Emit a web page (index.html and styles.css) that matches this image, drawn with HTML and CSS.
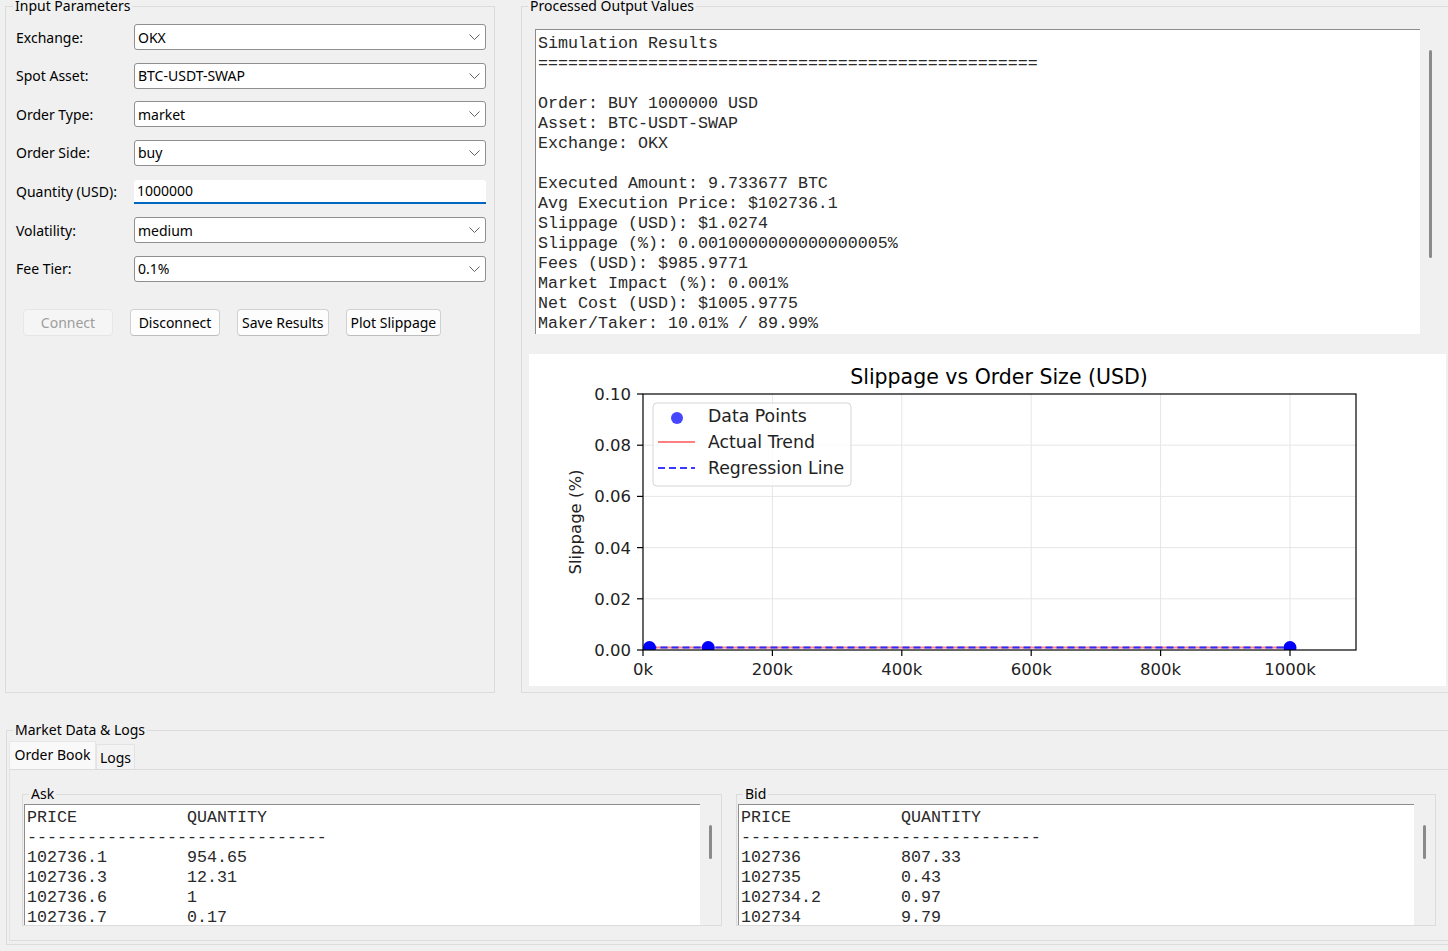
FILE: index.html
```html
<!DOCTYPE html>
<html>
<head>
<meta charset="utf-8">
<title>Trade Simulator</title>
<link rel="stylesheet" href="styles.css">
</head>
<body>
<div class="app">
  <div class="top">
    <fieldset class="group input-group">
      <legend>Input Parameters</legend>
      <div class="form">
        <label>Exchange:</label>
        <div class="combo"><span>OKX</span><svg class="chev" width="11" height="6" viewBox="0 0 11 6"><path d="M0.5 0.5 L5.5 5.5 L10.5 0.5" fill="none" stroke="#5f5f5f" stroke-width="1"/></svg></div>
        <label>Spot Asset:</label>
        <div class="combo"><span>BTC-USDT-SWAP</span><svg class="chev" width="11" height="6" viewBox="0 0 11 6"><path d="M0.5 0.5 L5.5 5.5 L10.5 0.5" fill="none" stroke="#5f5f5f" stroke-width="1"/></svg></div>
        <label>Order Type:</label>
        <div class="combo"><span>market</span><svg class="chev" width="11" height="6" viewBox="0 0 11 6"><path d="M0.5 0.5 L5.5 5.5 L10.5 0.5" fill="none" stroke="#5f5f5f" stroke-width="1"/></svg></div>
        <label>Order Side:</label>
        <div class="combo"><span>buy</span><svg class="chev" width="11" height="6" viewBox="0 0 11 6"><path d="M0.5 0.5 L5.5 5.5 L10.5 0.5" fill="none" stroke="#5f5f5f" stroke-width="1"/></svg></div>
        <label>Quantity (USD):</label>
        <div class="lineedit">1000000</div>
        <label>Volatility:</label>
        <div class="combo"><span>medium</span><svg class="chev" width="11" height="6" viewBox="0 0 11 6"><path d="M0.5 0.5 L5.5 5.5 L10.5 0.5" fill="none" stroke="#5f5f5f" stroke-width="1"/></svg></div>
        <label>Fee Tier:</label>
        <div class="combo"><span>0.1%</span><svg class="chev" width="11" height="6" viewBox="0 0 11 6"><path d="M0.5 0.5 L5.5 5.5 L10.5 0.5" fill="none" stroke="#5f5f5f" stroke-width="1"/></svg></div>
      </div>
      <div class="buttons">
        <button class="btn" disabled>Connect</button>
        <button class="btn">Disconnect</button>
        <button class="btn">Save Results</button>
        <button class="btn">Plot Slippage</button>
      </div>
    </fieldset>

    <fieldset class="group output-group">
      <legend>Processed Output Values</legend>
      <div class="textedit out">
<pre class="viewport">Simulation Results
==================================================

Order: BUY 1000000 USD
Asset: BTC-USDT-SWAP
Exchange: OKX

Executed Amount: 9.733677 BTC
Avg Execution Price: $102736.1
Slippage (USD): $1.0274
Slippage (%): 0.0010000000000000005%
Fees (USD): $985.9771
Market Impact (%): 0.001%
Net Cost (USD): $1005.9775
Maker/Taker: 10.01% / 89.99%</pre>
        <div class="vscroll"><div class="thumb out-thumb"></div></div>
      </div>
      <div class="chart">
        <svg class="plot" width="917" height="332" viewBox="0 0 917 332">
          <defs>
            <clipPath id="axclip"><rect x="114" y="40" width="713" height="256"/></clipPath>
          </defs>
          <text class="title" x="470" y="30" text-anchor="middle">Slippage vs Order Size (USD)</text>
          <g stroke="#e6e6e6" stroke-width="1">
            <line x1="243.4" y1="40" x2="243.4" y2="296"/>
            <line x1="372.8" y1="40" x2="372.8" y2="296"/>
            <line x1="502.2" y1="40" x2="502.2" y2="296"/>
            <line x1="631.6" y1="40" x2="631.6" y2="296"/>
            <line x1="761" y1="40" x2="761" y2="296"/>
            <line x1="114" y1="91.2" x2="827" y2="91.2"/>
            <line x1="114" y1="142.4" x2="827" y2="142.4"/>
            <line x1="114" y1="193.6" x2="827" y2="193.6"/>
            <line x1="114" y1="244.8" x2="827" y2="244.8"/>
          </g>
          <g clip-path="url(#axclip)">
            <polyline points="120.5,293.5 179.2,293.5 761,293.5" fill="none" stroke="#ff8080" stroke-width="2"/>
            <polyline points="120.5,293.5 179.2,293.5 761,293.5" fill="none" stroke="#2a2aff" stroke-width="2" stroke-dasharray="7 4"/>
            <circle cx="120.5" cy="293.5" r="6.5" fill="#0000ff"/>
            <circle cx="179.2" cy="293.5" r="6.5" fill="#0000ff"/>
            <circle cx="761" cy="293.5" r="6.5" fill="#0000ff"/>
          </g>
          <rect x="114" y="40" width="713" height="256" fill="none" stroke="#000" stroke-width="1.2"/>
          <g stroke="#000" stroke-width="1.2">
            <line x1="108" y1="40" x2="114" y2="40"/>
            <line x1="108" y1="91.2" x2="114" y2="91.2"/>
            <line x1="108" y1="142.4" x2="114" y2="142.4"/>
            <line x1="108" y1="193.6" x2="114" y2="193.6"/>
            <line x1="108" y1="244.8" x2="114" y2="244.8"/>
            <line x1="108" y1="296" x2="114" y2="296"/>
            <line x1="114" y1="296" x2="114" y2="302"/>
            <line x1="243.4" y1="296" x2="243.4" y2="302"/>
            <line x1="372.8" y1="296" x2="372.8" y2="302"/>
            <line x1="502.2" y1="296" x2="502.2" y2="302"/>
            <line x1="631.6" y1="296" x2="631.6" y2="302"/>
            <line x1="761" y1="296" x2="761" y2="302"/>
          </g>
          <g class="tick" text-anchor="end">
            <text x="102" y="46">0.10</text>
            <text x="102" y="97.2">0.08</text>
            <text x="102" y="148.4">0.06</text>
            <text x="102" y="199.6">0.04</text>
            <text x="102" y="250.8">0.02</text>
            <text x="102" y="302">0.00</text>
          </g>
          <g class="tick" text-anchor="middle">
            <text x="114" y="321">0k</text>
            <text x="243.4" y="321">200k</text>
            <text x="372.8" y="321">400k</text>
            <text x="502.2" y="321">600k</text>
            <text x="631.6" y="321">800k</text>
            <text x="761" y="321">1000k</text>
          </g>
          <text class="tick" transform="translate(52,168) rotate(-90)" text-anchor="middle">Slippage (%)</text>
          <rect x="124" y="49" width="198" height="83" rx="4" fill="#fff" fill-opacity="0.8" stroke="#d6d6d6"/>
          <circle cx="148" cy="64" r="6" fill="#4646ff"/>
          <line x1="129" y1="88" x2="166" y2="88" stroke="#ff8080" stroke-width="2"/>
          <line x1="129" y1="114" x2="166" y2="114" stroke="#3a3aff" stroke-width="2" stroke-dasharray="7 4"/>
          <g class="legend-text">
            <text x="179" y="68">Data Points</text>
            <text x="179" y="94">Actual Trend</text>
            <text x="179" y="120">Regression Line</text>
          </g>
        </svg>
      </div>
    </fieldset>
  </div>

  <fieldset class="group market-group">
    <legend>Market Data &amp; Logs</legend>
    <div class="tabs">
      <div class="tab active">Order Book</div>
      <div class="tab">Logs</div>
    </div>
    <div class="pane">
      <fieldset class="group book">
        <legend>Ask</legend>
        <div class="textedit book-edit">
<pre class="viewport">PRICE           QUANTITY
------------------------------
102736.1        954.65
102736.3        12.31
102736.6        1
102736.7        0.17
102736.9        2.4</pre>
          <div class="vscroll"><div class="thumb book-thumb"></div></div>
        </div>
      </fieldset>
      <fieldset class="group book">
        <legend>Bid</legend>
        <div class="textedit book-edit">
<pre class="viewport">PRICE           QUANTITY
------------------------------
102736          807.33
102735          0.43
102734.2        0.97
102734          9.79
102733.5        1.2</pre>
          <div class="vscroll"><div class="thumb book-thumb"></div></div>
        </div>
      </fieldset>
    </div>
  </fieldset>
</div>
</body>
</html>
```

FILE: styles.css
```css
* {
  box-sizing: border-box;
}

html,
body {
  margin: 0;
  padding: 0;
}

body {
  width: 1448px;
  height: 951px;
  overflow: hidden;
  background: #f0f0f0;
  font-family: "Noto Sans", "Open Sans", sans-serif;
  font-size: 14px;
  color: #000;
}

.app {
  display: flex;
  flex-direction: column;
}

.top {
  display: flex;
  margin-top: -2px;
}

.group {
  margin: 0;
  padding: 0;
  border: 1px solid #dcdcdc;
  min-width: 0;
}

.group > legend {
  padding: 0 2px;
  margin-left: 7px;
  font-size: 14px;
  line-height: 16px;
}

.input-group {
  margin-left: 5px;
  width: 490px;
  height: 695px;
  flex-shrink: 0;
}

.output-group {
  margin-left: 26px;
  width: 940px;
  height: 695px;
  flex-shrink: 0;
}

.output-group > legend {
  margin-left: 6px;
}

/* form */
.form {
  display: grid;
  grid-template-columns: 118px 352px;
  grid-auto-rows: 26px;
  row-gap: 12.67px;
  margin: 10px 0 0 10px;
  align-items: center;
}

.form label {
  white-space: nowrap;
}

.combo {
  height: 26px;
  display: flex;
  align-items: center;
  justify-content: space-between;
  padding: 0 5px 0 3px;
  background: #fff;
  border: 1px solid #8f8f8f;
  border-radius: 3px;
}

.lineedit {
  align-self: start;
  margin-top: 1px;
  height: 24px;
  padding: 0 3px;
  line-height: 22px;
  background: #fff;
  border-bottom: 2px solid #0067c0;
  border-radius: 3px 3px 0 0;
}

.buttons {
  display: flex;
  gap: 17px;
  margin: 27px 0 0 17px;
}

.btn {
  height: 27px;
  min-width: 90px;
  padding: 0 4px;
  font-family: inherit;
  font-size: 14px;
  color: #000;
  background: #fdfdfd;
  border: 1px solid #d0d0d0;
  border-bottom-color: #bdbdbd;
  border-radius: 4px;
}

.btn:disabled {
  background: #f5f5f5;
  border-color: #e6e6e6;
  color: #9d9d9d;
}

/* text edits */
.textedit {
  display: flex;
}

.viewport {
  flex: 1;
  margin: 0;
  min-width: 0;
  background: #fff;
  border-top: 1px solid #8c8c8c;
  border-left: 1px solid #8c8c8c;
  padding: 3px 0 0 2px;
  font-family: "Liberation Mono", "Courier New", monospace;
  font-size: 16.67px;
  line-height: 20px;
  white-space: pre;
  overflow: hidden;
  color: #2a2a2a;
}

.out .viewport {
  padding-top: 4px;
}

.vscroll {
  width: 21px;
  display: flex;
  justify-content: center;
  padding-top: 21px;
}

.thumb {
  width: 3px;
  background: #8a8a8a;
  border-radius: 2px;
}

.out {
  margin: 15px 0 0 13px;
  width: 906px;
  height: 305px;
}

.out-thumb {
  height: 208px;
}

.chart {
  margin: 20px 0 0 7px;
  width: 917px;
  height: 332px;
  background: #fff;
}

.plot {
  display: block;
}

.plot text {
  font-family: "DejaVu Sans", sans-serif;
  fill: #222;
}

.plot .title {
  font-size: 20.5px;
  fill: #000;
}

.plot .tick,
.plot .tick text {
  font-size: 16.5px;
}

.plot .legend-text text {
  font-size: 17.3px;
}

/* market data */
.market-group {
  margin: 29px 0 0 6px;
  width: 1460px;
  padding-bottom: 3px;
}

.market-group > legend {
  margin-left: 6px;
}

.tabs {
  display: flex;
  align-items: flex-end;
  height: 31px;
  margin-left: 2px;
}

.tab {
  height: 25px;
  width: 39px;
  padding-top: 2px;
  text-align: center;
  line-height: 22px;
  background: #f3f3f3;
  border: 1px solid #e3e3e3;
  border-bottom: none;
}

.tab.active {
  height: 28px;
  width: 87px;
  padding-top: 0;
  line-height: 26px;
  background: #f9f9f9;
  border-color: #e6e6e6;
}

.pane {
  display: grid;
  grid-template-columns: 700px 700px;
  column-gap: 14px;
  margin-left: 2px;
  padding: 16px 0 14px 12px;
  border-top: 1px solid #dcdcdc;
  border-left: 1px solid #e3e3e3;
  border-bottom: 1px solid #dcdcdc;
}

.book {
  height: 140px;
}

.book > legend {
  margin-left: 6px;
}

.book-edit {
  margin: 2px 0 0 1px;
  width: 697px;
  height: 121px;
}

.book-thumb {
  height: 34px;
}
```
